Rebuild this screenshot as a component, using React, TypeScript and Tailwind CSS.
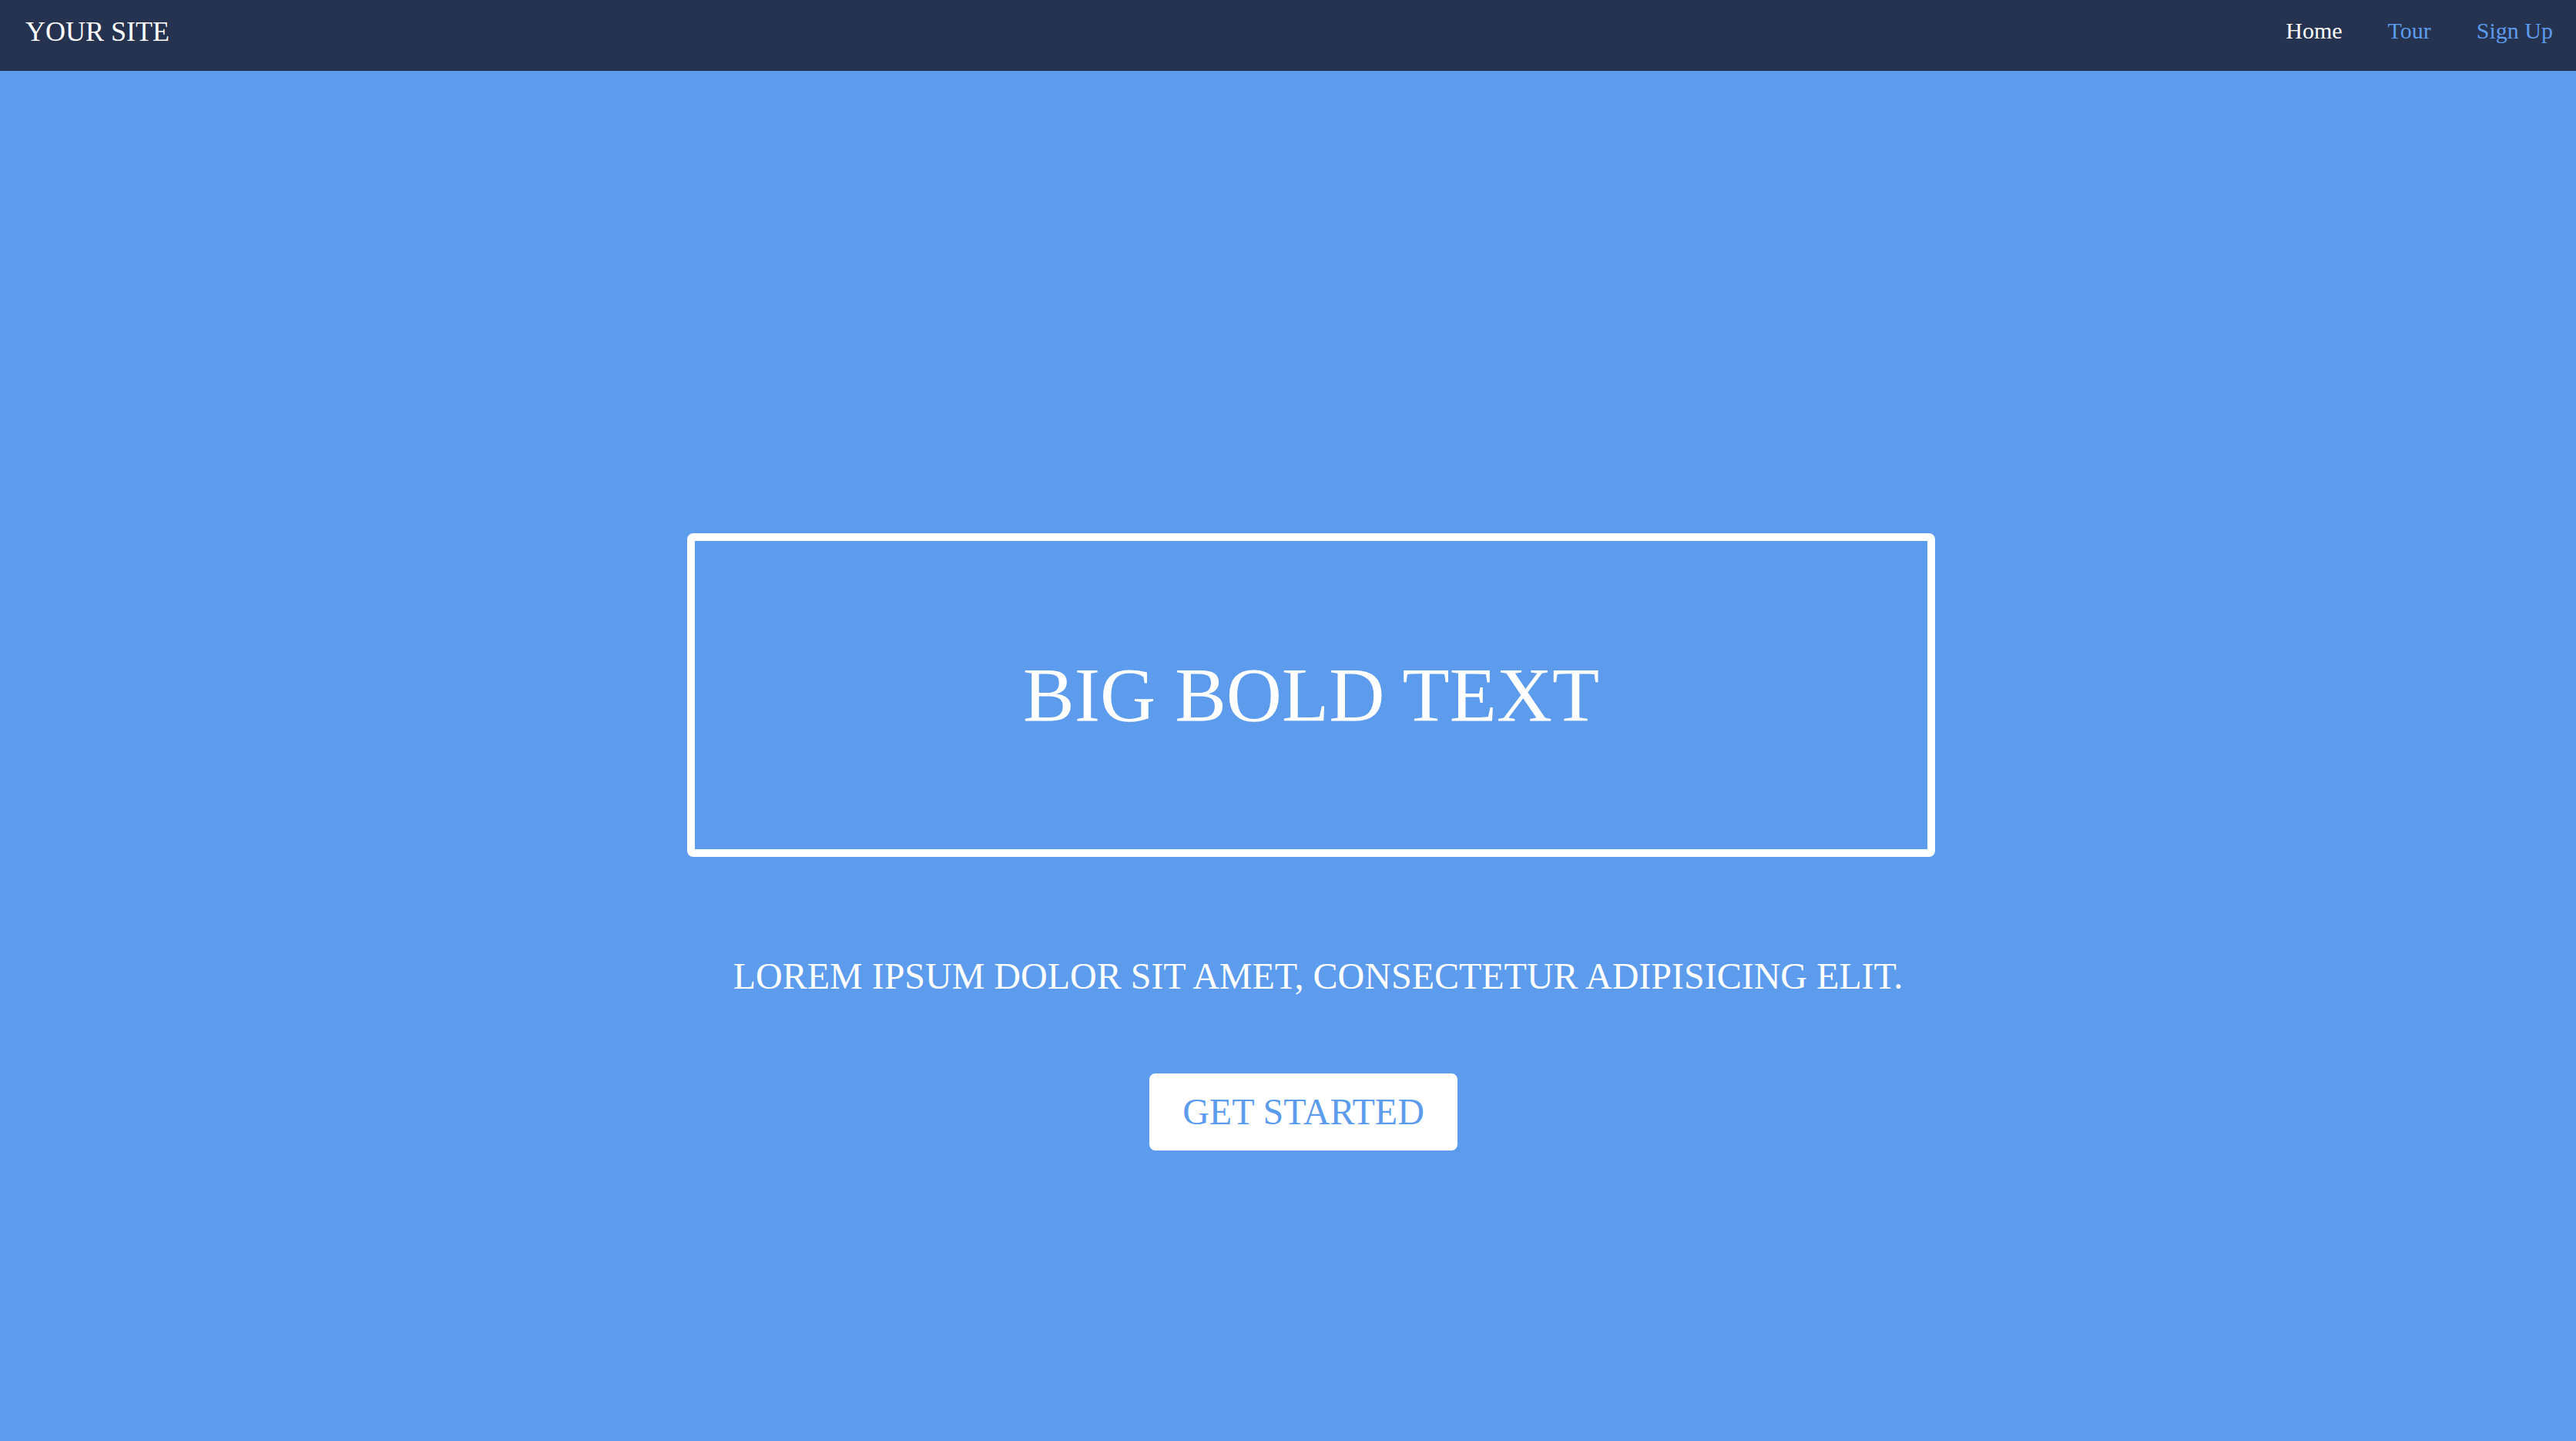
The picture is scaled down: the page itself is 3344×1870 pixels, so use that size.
import React from "react";

const links = [
  { label: "Home", active: true },
  { label: "Tour", active: false },
  { label: "Sign Up", active: false },
];

export default function App() {
  return (
    <div className="min-h-screen bg-[#5d9cec] font-['Liberation_Serif','Times_New_Roman',serif]">
      {/* Navbar */}
      <nav className="h-[92px] bg-[#263350] flex items-center justify-between pl-[33px] pr-[30px] pb-[10px]">
        <a href="#" className="text-[36px] text-white leading-none">
          YOUR SITE
        </a>
        <ul className="flex items-center gap-[59px]">
          {links.map((link) => (
            <li key={link.label}>
              <a
                href="#"
                className={`text-[30px] leading-none ${
                  link.active ? "text-white" : "text-[#5d9cec]"
                }`}
              >
                {link.label}
              </a>
            </li>
          ))}
        </ul>
      </nav>

      {/* Hero */}
      <main className="flex flex-col items-center pt-[600px] pl-[60px]">
        <div className="w-[1620px] h-[420px] border-[10px] border-white rounded-[8px] flex items-center justify-center">
          <h1 className="text-[100px] text-white font-normal">BIG BOLD TEXT</h1>
        </div>
        <p className="mt-[119px] ml-[18px] text-[48px] text-white">
          LOREM IPSUM DOLOR SIT AMET, CONSECTETUR ADIPISICING ELIT.
        </p>
        <button className="mt-[90px] mr-[20px] w-[400px] h-[100px] bg-white rounded-[8px] text-[48px] text-[#5d9cec]">
          GET STARTED
        </button>
      </main>
    </div>
  );
}
